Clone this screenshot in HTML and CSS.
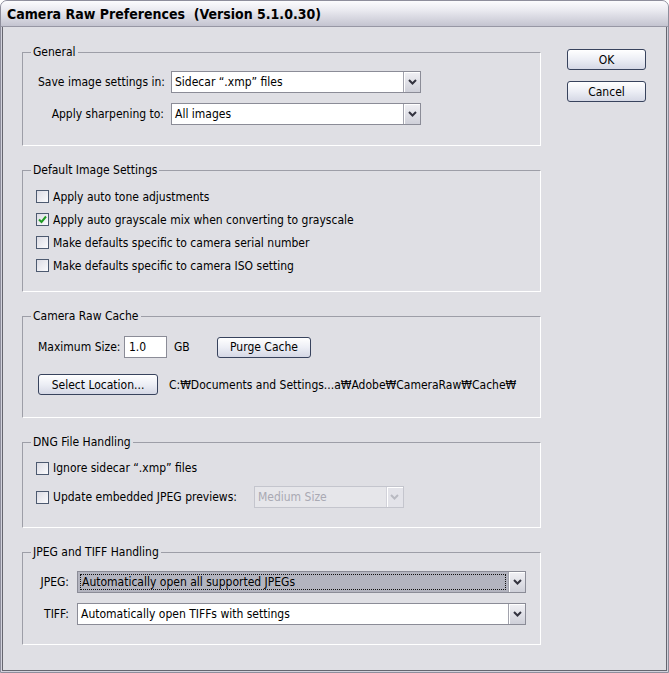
FILE: index.html
```html
<!DOCTYPE html>
<html>

	<head>
		<meta charset="UTF-8">
		<title>Camera Raw Preferences</title>
		<link rel="stylesheet" href="styles.css">
	</head>

	<body>
		<div class="win">
			<div class="cap">Camera Raw Preferences&nbsp; (Version 5.1.0.30)</div>
			<div class="client">
				<div class="groups">
					<!-- General -->
					<fieldset class="grp">
						<legend>General</legend>
						<div class="form general">
							<label>Save image settings in:</label>
							<div class="combo">
								<span class="val">Sidecar “.xmp” files</span>
								<span class="arr"><svg width="9" height="6" viewBox="0 0 9 6"><path d="M1 1 L4.5 4.5 L8 1" /></svg></span>
							</div>
							<label>Apply sharpening to:</label>
							<div class="combo">
								<span class="val">All images</span>
								<span class="arr"><svg width="9" height="6" viewBox="0 0 9 6"><path d="M1 1 L4.5 4.5 L8 1" /></svg></span>
							</div>
						</div>
					</fieldset>

					<!-- Default Image Settings -->
					<fieldset class="grp">
						<legend>Default Image Settings</legend>
						<div class="opts defaults">
							<div class="opt"><span class="check"></span>Apply auto tone adjustments</div>
							<div class="opt"><span class="check"><svg width="11" height="11" viewBox="0 0 11 11"><path d="M2 5.5 L4.5 8 L9 2.5" /></svg></span>Apply auto grayscale mix when converting to grayscale</div>
							<div class="opt"><span class="check"></span>Make defaults specific to camera serial number</div>
							<div class="opt"><span class="check"></span>Make defaults specific to camera ISO setting</div>
						</div>
					</fieldset>

					<!-- Camera Raw Cache -->
					<fieldset class="grp">
						<legend>Camera Raw Cache</legend>
						<div class="cache">
							<div class="size-row">
								<span class="size-label">Maximum Size:</span>
								<input class="field" type="text" value="1.0">
								<span class="unit">GB</span>
								<button class="btn purge">Purge Cache</button>
							</div>
							<div class="loc-row">
								<button class="btn loc">Select Location...</button>
								<span class="path">C:₩Documents and Settings...a₩Adobe₩CameraRaw₩Cache₩</span>
							</div>
						</div>
					</fieldset>

					<!-- DNG File Handling -->
					<fieldset class="grp">
						<legend>DNG File Handling</legend>
						<div class="opts dng">
							<div class="opt"><span class="check"></span>Ignore sidecar “.xmp” files</div>
							<div class="opt"><span class="check"></span>Update embedded JPEG previews:
								<div class="combo off preview">
									<span class="val">Medium Size</span>
									<span class="arr"><svg width="9" height="6" viewBox="0 0 9 6"><path d="M1 1 L4.5 4.5 L8 1" /></svg></span>
								</div>
							</div>
						</div>
					</fieldset>

					<!-- JPEG and TIFF Handling -->
					<fieldset class="grp">
						<legend>JPEG and TIFF Handling</legend>
						<div class="form jpeg">
							<label>JPEG:</label>
							<div class="combo focus">
								<span class="val"><span class="ring">Automatically open all supported JPEGs</span></span>
								<span class="arr"><svg width="9" height="6" viewBox="0 0 9 6"><path d="M1 1 L4.5 4.5 L8 1" /></svg></span>
							</div>
							<label>TIFF:</label>
							<div class="combo">
								<span class="val">Automatically open TIFFs with settings</span>
								<span class="arr"><svg width="9" height="6" viewBox="0 0 9 6"><path d="M1 1 L4.5 4.5 L8 1" /></svg></span>
							</div>
						</div>
					</fieldset>
				</div>

				<div class="actions">
					<button class="btn">OK</button>
					<button class="btn">Cancel</button>
				</div>
			</div>
		</div>
	</body>

</html>
```

FILE: styles.css
```css
* {
	margin: 0;
	padding: 0;
	box-sizing: border-box;
}

body {
	background: #fff;
	font-family: "DejaVu Sans Condensed", "Liberation Sans", "Noto Sans CJK KR", sans-serif;
	font-size: 12px;
	color: #000;
}

.win {
	width: 669px;
	height: 673px;
	display: flex;
	flex-direction: column;
	background: #d2d2dc;
	border: 1px solid #8e8e9c;
	border-radius: 7px 7px 0 0;
	overflow: hidden;
}

/* title bar */
.cap {
	height: 26px;
	padding-left: 6px;
	line-height: 27px;
	font-size: 14px;
	font-weight: bold;
	background: linear-gradient(#fcfcfe, #ebebf1 35%, #c4c4d0);
	border-bottom: 1px solid #9797a4;
}

.client {
	flex: 1;
	display: flex;
	gap: 26px;
	margin: 0 1px 1px 1px;
	padding: 18px 0 0 19px;
	background: #dfdfe4;
	border: 1px solid #66666f;
	border-top: 0;
}

.groups {
	width: 519px;
	display: flex;
	flex-direction: column;
	gap: 17px;
}

.grp {
	min-width: 0;
	border: 1px solid;
	border-color: #9d9ea7 #fff #fff #9d9ea7;
}

.grp legend {
	margin-left: 8px;
	padding: 0 2px;
	line-height: 14px;
}

/* label + combo grids */
.form {
	display: grid;
	align-items: center;
	row-gap: 10px;
}

.form label {
	text-align: right;
	white-space: nowrap;
}

.general {
	grid-template-columns: 126px 250px;
	column-gap: 7px;
	padding: 12px 0 20px 15px;
}

.jpeg {
	grid-template-columns: 34px 449px;
	column-gap: 8px;
	padding: 12px 0 19px 12px;
}

.combo {
	height: 22px;
	display: flex;
	background: #fff;
	border: 1px solid #8b8c97;
}

.combo .val {
	flex: 1;
	padding: 0 3px;
	line-height: 20px;
	white-space: nowrap;
	overflow: hidden;
}

.combo .arr {
	width: 17px;
	display: flex;
	align-items: center;
	justify-content: center;
	background: linear-gradient(#f1f1f5, #cfd0d9);
	border-left: 1px solid #a2a3ad;
	box-shadow: inset 1px 1px 0 #fff;
}

.combo .arr path {
	fill: none;
	stroke: #33333f;
	stroke-width: 2;
}

.combo.focus .val {
	padding: 2px;
	background: #b3b4bf;
}

.combo.focus .ring {
	display: block;
	height: 16px;
	padding-left: 1px;
	line-height: 15px;
	border: 1px dotted #111;
}

.combo.off {
	background: #e6e6ea;
	border-color: #c4c5cd;
	color: #a9a9b3;
}

.combo.off .arr {
	background: #e3e3e9;
	border-left-color: #d2d2da;
}

.combo.off .arr path {
	stroke: #b9bac2;
}

/* checkbox rows */
.opts .opt {
	display: flex;
	align-items: center;
	gap: 4px;
	white-space: nowrap;
}

.defaults {
	padding: 8px 0 14px 13px;
}

.defaults .opt {
	height: 23px;
}

.dng {
	padding: 8px 0 19px 13px;
}

.dng .opt {
	height: 22px;
}

.dng .opt + .opt {
	margin-top: 7px;
}

.check {
	width: 13px;
	height: 13px;
	display: flex;
	align-items: center;
	justify-content: center;
	border: 1px solid #4d5a70;
	background: linear-gradient(135deg, #dcdce4, #fbfbfd);
}

.check path {
	fill: none;
	stroke: #1f9b22;
	stroke-width: 2;
}

.preview {
	width: 150px;
	margin-left: 13px;
}

/* cache */
.cache {
	padding: 13px 0 22px 15px;
}

.size-row {
	height: 22px;
	display: flex;
	align-items: center;
}

.size-label {
	width: 86px;
}

.field {
	width: 43px;
	height: 22px;
	padding: 0 4px;
	border: 1px solid #8b8c97;
	font: inherit;
	outline: none;
}

.unit {
	width: 50px;
	padding-left: 7px;
}

.loc-row {
	margin-top: 16px;
	display: flex;
	align-items: center;
	gap: 11px;
}

.btn {
	height: 21px;
	border: 1px solid #38435d;
	border-radius: 3px;
	background: linear-gradient(#ffffff, #eceef5 50%, #d5d8e5);
	font: inherit;
	color: #000;
	cursor: pointer;
}

.purge {
	width: 94px;
}

.loc {
	width: 120px;
}

.actions {
	width: 79px;
	margin-top: 4px;
	display: flex;
	flex-direction: column;
	gap: 11px;
}
```
